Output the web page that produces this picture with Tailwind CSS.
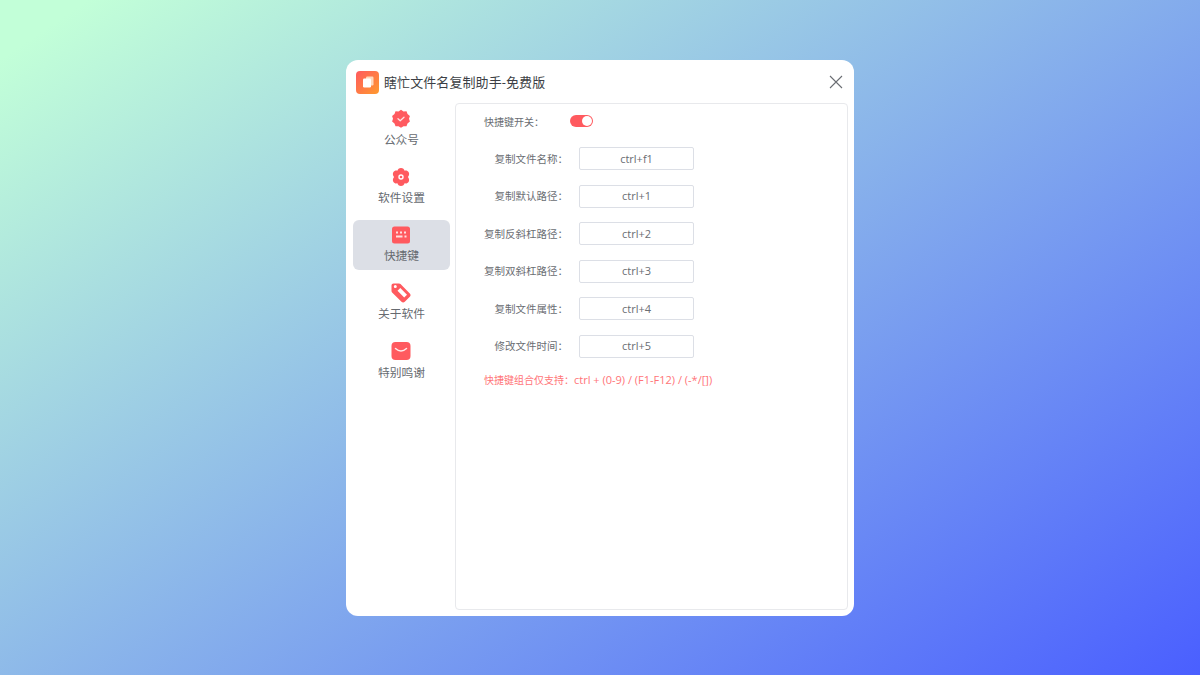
<!DOCTYPE html>
<html lang="zh-CN">
<head>
  <meta charset="UTF-8">
  <title>瞎忙文件名复制助手-免费版</title>
  <script src="https://cdn.jsdelivr.net/npm/@tailwindcss/browser@4"></script>
</head>
<body class="h-[675px] w-[1200px] overflow-hidden bg-[linear-gradient(146deg,#c2ffd8_0%,#c2ffd8_4%,#4a5fff_100%)] font-['Open_Sans','Noto_Sans_CJK_SC',sans-serif]">
  <div class="flex h-full items-start justify-center pt-[60px]">
    <!-- 窗口 -->
    <div class="flex h-[556px] w-[508px] flex-col rounded-xl bg-white">
      <!-- 标题栏 -->
      <div class="flex h-[43px] shrink-0 items-center pr-[10px] pl-[10px] pt-[1px]">
        <div class="flex h-[23px] w-[23px] items-center justify-center rounded-[4px] bg-[linear-gradient(135deg,#ff5a5f,#ff9a2e)]">
          <svg width="16" height="16" viewBox="0 0 16 16">
            <rect x="6" y="2.5" width="7.5" height="9" rx="1.2" fill="#ffd9bd"/>
            <rect x="3" y="4.5" width="8" height="9" rx="1.2" fill="#fff"/>
          </svg>
        </div>
        <span class="ml-[5px] mt-[2px] text-[13px] tracking-[0.08px] text-[#3c3f45]">瞎忙文件名复制助手-免费版</span>
        <svg class="mr-[1px] ml-auto" width="14" height="14" viewBox="0 0 14 14" fill="none" stroke="#6a6d72" stroke-width="1.1">
          <path d="M1 1l12 12M13 1L1 13"/>
        </svg>
      </div>
      <div class="flex min-h-0 flex-1 pr-[6px] pb-[6px] pl-[7px]">
        <!-- 侧边菜单 -->
        <nav class="flex w-[97px] shrink-0 flex-col gap-2 pt-[1px] text-[11.75px] text-[#666a70]">
          <a class="flex h-[50px] flex-col items-center rounded-md pt-[5px]">
            <svg class="mr-[1px]" width="20" height="20" viewBox="0 0 20 20">
              <path fill="#ff5a5f" d="M10 .8l2.500 1.600 3-.2 1 2.900 2.400 1.800-.9 2.900.9 2.800-2.400 1.800-1 2.900-3-.1L10 18.700l-2.500-1.500-3 .1-1-2.900-2.400-1.800.9-2.800-.9-2.900 2.400-1.800 1-2.900 3 .2z"/>
              <path fill="none" stroke="#ffe3e3" stroke-width="1.300" stroke-linecap="round" stroke-linejoin="round" d="M7 9.800l2.200 2 3.800-3.500"/>
            </svg>
            <span class="mt-[1px] leading-[18px]">公众号</span>
          </a>
          <a class="flex h-[50px] flex-col items-center rounded-md pt-[5px]">
            <svg class="mr-[1px]" width="20" height="20" viewBox="0 0 20 20">
              <path fill="#ff5a5f" fill-rule="evenodd" d="M10 1c2 0 3.200 1.300 3.600 2.700 1.500-.4 3.200 0 4.100 1.600.9 1.700.3 3.400-.8 4.700 1.100 1.300 1.700 3 .8 4.700-.9 1.600-2.600 2-4.100 1.600C13.200 17.700 12 19 10 19s-3.200-1.300-3.600-2.700c-1.500.4-3.200 0-4.100-1.600-.9-1.700-.3-3.400.8-4.700-1.100-1.300-1.700-3-.8-4.700.9-1.600 2.600-2 4.100-1.600C6.800 2.300 8 1 10 1zm0 6.300a2.700 2.700 0 100 5.400 2.700 2.700 0 000-5.400z"/>
              <circle cx="10" cy="10" r="1.300" fill="#ff5a5f"/>
            </svg>
            <span class="mt-[1px] leading-[18px]">软件设置</span>
          </a>
          <a class="flex h-[50px] flex-col items-center rounded-md bg-[#dcdfe6] pt-[5px]">
            <svg class="mr-[1px]" width="20" height="20" viewBox="0 0 20 20">
              <rect x="1" y="1.500" width="18" height="17" rx="2.500" fill="#ff5a5f"/>
              <path stroke="#ffe0e0" stroke-width="2" stroke-dasharray="2 2" fill="none" d="M5 7.500h10"/>
              <path stroke="#ffe0e0" stroke-width="2" fill="none" d="M5 11.500h6.500M13.500 11.500h2"/>
            </svg>
            <span class="mt-[1px] leading-[18px]">快捷键</span>
          </a>
          <a class="flex h-[50px] flex-col items-center rounded-md pt-[5px]">
            <svg class="mr-[1px]" width="20" height="20" viewBox="0 0 20 20">
              <path fill="#ff5a5f" fill-rule="evenodd" d="M2.500.5h5.500c.6 0 1.100.2 1.500.6l9.300 9.300c1 1 1 2.300 0 3.300l-5 5c-1 1-2.300 1-3.300 0L1.100 9.500C.7 9.100.5 8.600.5 8V2.500c0-1.100.9-2 2-2zm1.800 1.600a1.500 1.500 0 100 3 1.500 1.500 0 000-3zM9.300 5L6.500 7.800l6.700 6.700 2.800-2.800z"/>
            </svg>
            <span class="mt-[1px] leading-[18px]">关于软件</span>
          </a>
          <a class="flex h-[50px] flex-col items-center rounded-md pt-[5px]">
            <svg class="mr-[1px]" width="20" height="20" viewBox="0 0 20 20">
              <rect x="0.500" y="1" width="19" height="18" rx="4" fill="#ff5a5f"/>
              <path fill="none" stroke="#ffeaea" stroke-width="1.500" stroke-linecap="round" d="M4.500 7.500c3.500 3.200 7.500 3.200 11 0"/>
            </svg>
            <span class="mt-[2px] leading-[18px]">特别鸣谢</span>
          </a>
        </nav>
        <!-- 快捷键面板 -->
        <main class="ml-[5px] flex-1 rounded-[4px] border border-[#e8e9ec] pt-[7px] pl-[28px] text-[11px] text-[#6a6d72]">
          <div class="flex h-[19px] items-center">
            <span class="mt-[3px] w-[86px] text-[10px]">快捷键开关：</span>
            <span class="flex h-3 w-[23px] items-center justify-end rounded-full bg-[#ff5a5f] pr-[1px]">
              <span class="h-[10px] w-[10px] rounded-full bg-white"></span>
            </span>
          </div>
          <div class="mt-[17px] flex flex-col gap-[14.5px]">
            <div class="flex h-[23px] items-center">
              <span class="mt-[2px] w-[84px] whitespace-nowrap text-right text-[10.5px]">复制文件名称：</span>
              <div class="ml-[11px] flex h-[23px] w-[115px] items-center justify-center rounded-[2px] border border-[#dcdfe6] pt-[1px] text-[#6a6d72]">ctrl+f1</div>
            </div>
            <div class="flex h-[23px] items-center">
              <span class="mt-[2px] w-[84px] whitespace-nowrap text-right text-[10.5px]">复制默认路径：</span>
              <div class="ml-[11px] flex h-[23px] w-[115px] items-center justify-center rounded-[2px] border border-[#dcdfe6] pt-[1px] text-[#6a6d72]">ctrl+1</div>
            </div>
            <div class="flex h-[23px] items-center">
              <span class="mt-[2px] w-[84px] whitespace-nowrap text-right text-[10.5px]">复制反斜杠路径：</span>
              <div class="ml-[11px] flex h-[23px] w-[115px] items-center justify-center rounded-[2px] border border-[#dcdfe6] pt-[1px] text-[#6a6d72]">ctrl+2</div>
            </div>
            <div class="flex h-[23px] items-center">
              <span class="mt-[2px] w-[84px] whitespace-nowrap text-right text-[10.5px]">复制双斜杠路径：</span>
              <div class="ml-[11px] flex h-[23px] w-[115px] items-center justify-center rounded-[2px] border border-[#dcdfe6] pt-[1px] text-[#6a6d72]">ctrl+3</div>
            </div>
            <div class="flex h-[23px] items-center">
              <span class="mt-[2px] w-[84px] whitespace-nowrap text-right text-[10.5px]">复制文件属性：</span>
              <div class="ml-[11px] flex h-[23px] w-[115px] items-center justify-center rounded-[2px] border border-[#dcdfe6] pt-[1px] text-[#6a6d72]">ctrl+4</div>
            </div>
            <div class="flex h-[23px] items-center">
              <span class="mt-[2px] w-[84px] whitespace-nowrap text-right text-[10.5px]">修改文件时间：</span>
              <div class="ml-[11px] flex h-[23px] w-[115px] items-center justify-center rounded-[2px] border border-[#dcdfe6] pt-[1px] text-[#6a6d72]">ctrl+5</div>
            </div>
          </div>
          <p class="mt-[13px] leading-[18px] text-[#ff7478]"><span class="text-[10px]">快捷键组合仅支持：</span>ctrl + (0-9) / (F1-F12) / (-*/[])</p>
        </main>
      </div>
    </div>
  </div>
</body>
</html>
